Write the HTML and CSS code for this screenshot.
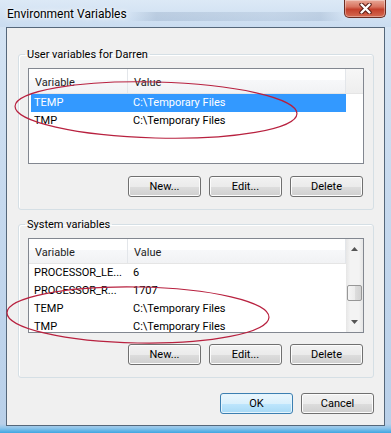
FILE: index.html
```html
<!DOCTYPE html>
<html lang="en">
<head>
    <meta charset="UTF-8">
    <title>Environment Variables</title>
    <link rel="stylesheet" href="styles.css">
</head>
<body>
    <div class="window">
        <div class="titlebar">
            <span class="title">Environment Variables</span>
            <button class="close-btn" title="Close">
                <svg width="13" height="11" viewBox="0 0 13 11">
                    <path d="M2.5 1.5 L10.5 9.5 M10.5 1.5 L2.5 9.5" stroke="#5b1e16" stroke-width="4.4" stroke-linecap="round"/>
                    <path d="M2.5 1.5 L10.5 9.5 M10.5 1.5 L2.5 9.5" stroke="#fff" stroke-width="2.4" stroke-linecap="round"/>
                </svg>
            </button>
        </div>

        <div class="client">
            <!-- user variables -->
            <fieldset class="group">
                <legend>User variables for Darren</legend>
                <div class="list list-user">
                    <div class="list-body">
                        <div class="list-header">
                            <div class="head-cell col-name">Variable</div>
                            <div class="head-cell col-value">Value</div>
                            <div class="head-fill"></div>
                        </div>
                        <div class="row selected">
                            <span class="cell cell-name">TEMP</span>
                            <span class="cell cell-value">C:\Temporary Files</span>
                        </div>
                        <div class="row">
                            <span class="cell cell-name">TMP</span>
                            <span class="cell cell-value">C:\Temporary Files</span>
                        </div>
                    </div>
                </div>
                <div class="buttons">
                    <button class="btn">New...</button>
                    <button class="btn">Edit...</button>
                    <button class="btn">Delete</button>
                </div>
            </fieldset>

            <!-- system variables -->
            <fieldset class="group group-system">
                <legend>System variables</legend>
                <div class="list list-system">
                    <div class="list-body">
                        <div class="list-header">
                            <div class="head-cell col-name">Variable</div>
                            <div class="head-cell col-value">Value</div>
                        </div>
                        <div class="row">
                            <span class="cell cell-name">PROCESSOR_LE...</span>
                            <span class="cell cell-value">6</span>
                        </div>
                        <div class="row">
                            <span class="cell cell-name">PROCESSOR_R...</span>
                            <span class="cell cell-value">1707</span>
                        </div>
                        <div class="row">
                            <span class="cell cell-name">TEMP</span>
                            <span class="cell cell-value">C:\Temporary Files</span>
                        </div>
                        <div class="row">
                            <span class="cell cell-name">TMP</span>
                            <span class="cell cell-value">C:\Temporary Files</span>
                        </div>
                    </div>
                    <div class="scrollbar">
                        <div class="scroll-arrow">
                            <svg width="7" height="4" viewBox="0 0 7 4"><polygon points="0,4 3.5,0 7,4" fill="#555"/></svg>
                        </div>
                        <div class="scroll-thumb"></div>
                        <div class="scroll-space"></div>
                        <div class="scroll-arrow">
                            <svg width="7" height="4" viewBox="0 0 7 4"><polygon points="0,0 3.5,4 7,0" fill="#555"/></svg>
                        </div>
                    </div>
                </div>
                <div class="buttons">
                    <button class="btn">New...</button>
                    <button class="btn">Edit...</button>
                    <button class="btn">Delete</button>
                </div>
            </fieldset>

            <div class="footer">
                <button class="btn btn-default">OK</button>
                <button class="btn">Cancel</button>
            </div>
        </div>

        <!-- red marker circles drawn over the screenshot -->
        <svg class="marks" width="391" height="433" viewBox="0 0 391 433">
            <ellipse cx="156" cy="110" rx="141" ry="28" transform="rotate(1.5 156 110)"/>
            <ellipse cx="138" cy="315" rx="131" ry="28" transform="rotate(1 138 315)"/>
        </svg>
    </div>
</body>
</html>
```

FILE: styles.css
```css
:root {
    --face: #f0f0f0;
    --text: #000;
    --select: #3399ff;
    --list-border: #828790;
    --group-border: #d5dfe5;
}

* {
    box-sizing: border-box;
}

body {
    margin: 0;
    background: #c9dbee;
    font-family: Roboto, 'Liberation Sans', sans-serif;
    font-size: 11px;
    color: var(--text);
}

.window {
    position: relative;
    width: 391px;
    height: 433px;
    overflow: hidden;
    display: flex;
    flex-direction: column;
    background: linear-gradient(to bottom, #d6e5f4 0, #c6d9ee 200px, #b9d0e9 424px, #8fc5ea 428px, #3fa6e2 433px);
}

/* title bar */
.titlebar {
    height: 27px;
    flex: 0 0 27px;
    display: flex;
    justify-content: space-between;
    align-items: flex-start;
    padding-left: 7px;
    background:
        linear-gradient(to right, transparent 33%, rgba(60, 90, 130, 0.16) 40%, rgba(60, 90, 130, 0.1) 70%, rgba(60, 90, 130, 0.14) 82%, transparent 88%) no-repeat 0 12px / 100% 9px,
        linear-gradient(to bottom, #dce9f6, #cadcf0);
}

.title {
    line-height: 28px;
    font-size: 12px;
    color: #000;
    text-shadow: 0 0 6px #fff, 0 0 3px #fff;
}

.close-btn {
    width: 42px;
    height: 18px;
    margin-right: 5px;
    padding: 0;
    display: flex;
    align-items: center;
    justify-content: center;
    border: 1px solid #6a2c22;
    border-top: none;
    border-radius: 0 0 5px 5px;
    background: linear-gradient(to bottom, #e9a897 0%, #d8735f 40%, #c4402c 55%, #d46a52 100%);
    box-shadow: inset 0 0 0 1px rgba(255, 255, 255, 0.35);
}

/* dialog body */
.client {
    height: 399px;
    margin: 0 6px;
    border: 1px solid #55677a;
    background: var(--face);
    display: flex;
    flex-direction: column;
}

.group {
    margin: 19px 10px 0 11px;
    padding: 6px 9px 12px;
    border: 1px solid var(--group-border);
    border-radius: 3px;
    box-shadow: inset 1px 1px 0 #fff;
    min-width: 0;
}

.group-system {
    margin-top: 7px;
}

.group legend {
    margin-left: -3px;
    padding: 0 2px;
    line-height: 15px;
    font-size: 11px;
}

/* list view */
.list {
    display: flex;
    overflow: hidden;
    border: 1px solid var(--list-border);
    background: #fff;
}

.list-user {
    height: 96px;
}

.list-system {
    height: 95px;
}

.list-body {
    flex: 1;
    min-width: 0;
}

.list-header {
    display: flex;
    height: 25px;
    border-bottom: 1px solid #e5e5e5;
    background: linear-gradient(to bottom, #fff 0%, #fff 45%, #f7f8fa 46%, #f1f2f4 100%);
}

.head-cell {
    padding: 3px 0 0 6px;
    line-height: 21px;
    color: #1e1e1e;
    border-right: 1px solid #e3e6ea;
    white-space: nowrap;
}

.col-name {
    width: 99px;
}

.col-value {
    width: 218px;
}

.head-fill {
    flex: 1;
    background: linear-gradient(to bottom, #f7f7f7, #eeeeee);
}

.row {
    display: flex;
    width: 315px;
    height: 18px;
    margin-left: 2px;
    line-height: 18px;
    white-space: nowrap;
}

.row.selected {
    background: var(--select);
    color: #fff;
}

.cell {
    overflow: hidden;
}

.cell-name {
    width: 97px;
    padding-left: 3px;
}

.cell-value {
    width: 218px;
    padding-left: 5px;
}

/* vertical scrollbar */
.scrollbar {
    width: 17px;
    flex: 0 0 17px;
    display: flex;
    flex-direction: column;
    align-items: center;
    background: linear-gradient(to right, #e6e6e6, #f3f3f3 25%, #f3f3f3 75%, #e6e6e6);
}

.scroll-arrow {
    width: 100%;
    height: 20px;
    display: flex;
    align-items: center;
    justify-content: center;
}

.scroll-thumb {
    width: 15px;
    height: 16px;
    margin-top: 26px;
    border: 1px solid #979797;
    border-radius: 2px;
    background: linear-gradient(to right, #f5f5f5, #ececec 50%, #dedede 51%, #d2d2d2);
}

.scroll-space {
    flex: 1;
}

/* buttons */
.buttons {
    display: flex;
    justify-content: flex-end;
    gap: 8px;
    margin-top: 12px;
    padding-right: 1px;
}

.group-system .buttons {
    margin-top: 11px;
}

.btn {
    width: 73px;
    height: 21px;
    padding: 0;
    font-family: inherit;
    font-size: 11px;
    color: #000;
    border: 1px solid #707070;
    border-radius: 3px;
    background: linear-gradient(to bottom, #f2f2f2 0%, #ebebeb 50%, #dddddd 51%, #cfcfcf 100%);
    box-shadow: inset 0 0 0 1px #fcfcfc;
}

.btn-default {
    border-color: #3c7fb1;
    background: linear-gradient(to bottom, #eaf6fd 0%, #d9f0fc 50%, #bee6fd 51%, #a7d9f5 100%);
    box-shadow: inset 0 0 0 1px #e5f4fc;
}

.footer {
    display: flex;
    justify-content: flex-end;
    gap: 8px;
    margin-top: 15px;
    padding-right: 10px;
}

/* red hand-drawn marks */
.marks {
    position: absolute;
    top: 0;
    left: 0;
    pointer-events: none;
}

.marks ellipse {
    fill: none;
    stroke: #b8213f;
    stroke-width: 1.2;
}
```
